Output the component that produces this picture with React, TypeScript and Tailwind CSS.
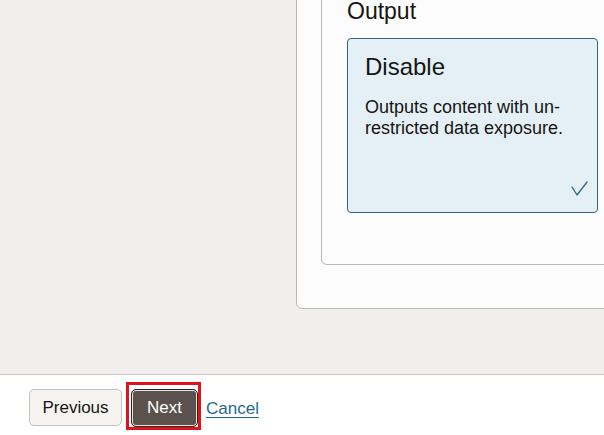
export default function App() {
  return (
    <div className="flex h-[435px] w-[604px] flex-col overflow-hidden bg-[#f1efed] font-['Liberation_Sans',Arial,sans-serif] text-[#161513]">
      {/* Scrolled content area, anchored to the bottom */}
      <main className="flex h-[374px] flex-col justify-end overflow-hidden pb-[65px] pl-[296px]">
        <section className="w-[420px] shrink-0 rounded-[6px] border border-[#bcb8b3] bg-[#fcfcfc] pb-[43px] pl-[24px] pt-[24px]">
          <div className="rounded-[6px] border border-[#bcb8b3] bg-[#fcfcfc] pb-[51px] pl-[25px] pt-[25px]">
            <h2 className="mb-[13px] text-[23px] leading-[28px]">Output</h2>

            {/* Selected option card */}
            <div className="relative h-[175px] w-[251px] rounded-[4px] border border-[#2f6580] bg-[#e4f0f5] pl-[17px] pr-4 pt-[14px]">
              <div className="text-[24px] leading-[28px]">Disable</div>
              <p className="mt-4 text-[18px] leading-[21px]">
                Outputs content with un-
                <br />
                restricted data exposure.
              </p>
              <svg
                className="absolute bottom-[16px] right-[9px] h-[15px] w-[17px]"
                viewBox="0 0 17 15"
                fill="none"
                stroke="#31708b"
                strokeWidth="1.4"
                strokeLinecap="round"
                strokeLinejoin="round"
              >
                <polyline points="1,6 6,14 16,1" />
              </svg>
            </div>
          </div>
        </section>
      </main>

      {/* Footer actions */}
      <footer className="flex h-[61px] items-start gap-2 border-t border-[#cdc9c5] bg-white pl-[29px] pt-[14px]">
        <button className="h-[37px] w-[93px] rounded-[5px] border border-[#c5c1bc] bg-[#f6f4f1] text-[17px] text-[#161513]">
          Previous
        </button>
        <div className="relative ml-px">
          <button className="h-[38px] w-[67px] rounded-[5px] border border-[#2c2623] bg-[#5b524d] text-[17px] text-white shadow-[inset_0_0_0_1px_rgba(255,255,255,0.85)]">
            Next
          </button>
          <span className="pointer-events-none absolute -left-[5px] -top-[7px] h-[48px] w-[75px] border-[3px] border-[#e0121c]" />
        </div>
        <a href="#" className="mt-[10px] text-[17px] leading-[20px] text-[#1f6a8a] underline underline-offset-[3px]">
          Cancel
        </a>
      </footer>
    </div>
  )
}
